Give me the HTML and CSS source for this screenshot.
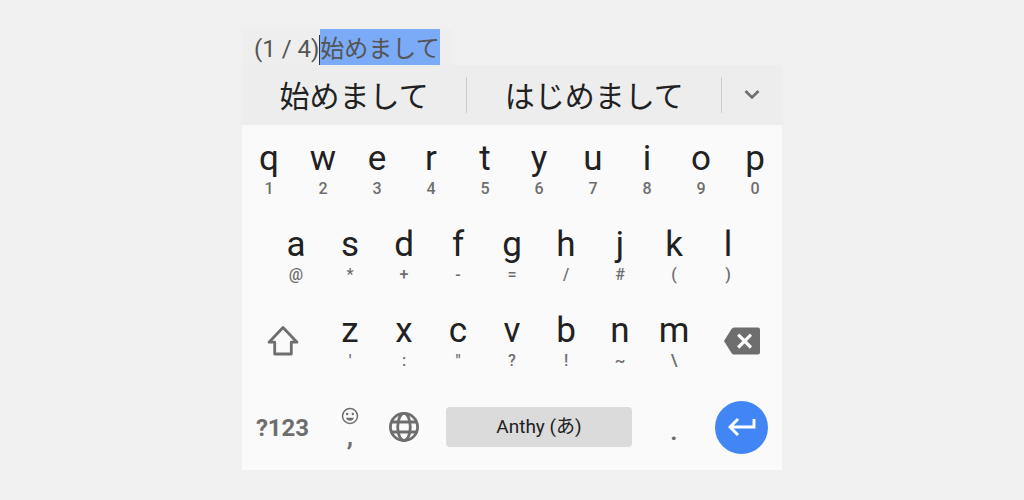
FILE: index.html
```html
<!DOCTYPE html>
<html lang="ja">
<head>
  <meta charset="UTF-8" />
  <meta name="viewport" content="width=device-width, initial-scale=1" />
  <title>Anthy Keyboard</title>
  <link rel="stylesheet" href="styles.css">
</head>
<body>
  <main class="keyboard">
    <div class="preedit"><span>(1 / 4)</span><span class="cursor"></span><mark>始めまして</mark></div>

    <div class="candidates">
      <button class="candidate">始めまして</button>
      <button class="candidate wide">はじめまして</button>
      <button class="expand" aria-label="More candidates">
        <svg width="24" height="24" viewBox="0 0 24 24"><path d="M5.5 8 12 14.500 18.500 8" fill="none" stroke="currentColor" stroke-width="2.600"/></svg>
      </button>
    </div>

    <div class="keys">
      <div class="row">
        <button class="key">q<small>1</small></button>
        <button class="key">w<small>2</small></button>
        <button class="key">e<small>3</small></button>
        <button class="key">r<small>4</small></button>
        <button class="key">t<small>5</small></button>
        <button class="key">y<small>6</small></button>
        <button class="key">u<small>7</small></button>
        <button class="key">i<small>8</small></button>
        <button class="key">o<small>9</small></button>
        <button class="key">p<small>0</small></button>
      </div>

      <div class="row">
        <button class="key first">a<small>@</small></button>
        <button class="key">s<small>*</small></button>
        <button class="key">d<small>+</small></button>
        <button class="key">f<small>-</small></button>
        <button class="key">g<small>=</small></button>
        <button class="key">h<small>/</small></button>
        <button class="key">j<small>#</small></button>
        <button class="key">k<small>(</small></button>
        <button class="key">l<small>)</small></button>
      </div>

      <div class="row">
        <button class="key side" aria-label="Shift">
          <svg width="32" height="32" viewBox="0 0 32 32"><path d="M16 2.500 30 17.200H24.300V29H7.700V17.200H2Z" fill="none" stroke="currentColor" stroke-width="2.800" stroke-linejoin="round"/></svg>
        </button>
        <button class="key">z<small>'</small></button>
        <button class="key">x<small>:</small></button>
        <button class="key">c<small>"</small></button>
        <button class="key">v<small>?</small></button>
        <button class="key">b<small>!</small></button>
        <button class="key">n<small>~</small></button>
        <button class="key">m<small>\</small></button>
        <button class="key side" aria-label="Backspace">
          <svg width="36" height="28" viewBox="0 0 36 28"><path d="M10 .5H34Q36 .5 36 2.500V25.500Q36 27.500 34 27.500H10Q8.500 27.500 7.500 26L0 14 7.500 2Q8.500 .5 10 .5Z" fill="currentColor"/><path d="M14.200 7.700 27 20.500M27 7.700 14.200 20.500" stroke="#fafafa" stroke-width="3.200"/></svg>
        </button>
      </div>

      <div class="row">
        <button class="key side symbols">?123</button>
        <button class="key comma" aria-label="Comma, emoji">
          <svg width="18" height="18" viewBox="0 0 18 18"><circle cx="9" cy="9" r="7.500" fill="none" stroke="currentColor" stroke-width="1.500"/><circle cx="6.200" cy="7" r="1.200" fill="currentColor"/><circle cx="11.800" cy="7" r="1.200" fill="currentColor"/><path d="M5 10.700H13Q12 13.700 9 13.700T5 10.700Z" fill="currentColor"/></svg>
          <span>,</span>
        </button>
        <button class="key icon" aria-label="Switch language">
          <svg width="32" height="32" viewBox="0 0 32 32" fill="none" stroke="currentColor" stroke-width="2.800"><circle cx="16" cy="16" r="13.600"/><ellipse cx="16" cy="16" rx="6.300" ry="13.600"/><path d="M3.500 11H28.500M3.500 21H28.500"/></svg>
        </button>
        <button class="key space"><span>Anthy (あ)</span></button>
        <button class="key period">.</button>
        <button class="key side" aria-label="Enter">
          <span class="enter"><svg width="30" height="22" viewBox="0 0 30 22"><path d="M27 3V11H3M11 3 3 11 11 19" fill="none" stroke="currentColor" stroke-width="2.900"/></svg></span>
        </button>
      </div>
    </div>
  </main>
</body>
</html>
```
FILE: styles.css
```css
* {
  box-sizing: border-box;
}

body {
  margin: 0;
  padding: 29px 16px;
  background: #f0f0f0;
  font-family: Roboto, "Noto Sans CJK JP", sans-serif;
  color: #212121;
}

button {
  padding: 0;
  border: none;
  background: none;
  color: inherit;
  font: inherit;
  cursor: pointer;
}

svg {
  display: block;
}

.keyboard {
  max-width: 540px;
  margin: 0 auto;
}

.preedit {
  display: flex;
  width: fit-content;
  padding: 0 12px;
  background: #eeeeee;
  color: #555;
  font-size: 24px;
  line-height: 32px;
}

.preedit span,
.preedit mark {
  padding-top: 4px;
}

.preedit mark {
  background: #7baaf7;
  color: inherit;
}

.preedit .cursor {
  width: 1px;
  margin-top: 6px;
  background: #333;
}

.candidates {
  display: flex;
  align-items: center;
  height: 60px;
  background: #ededed;
}

.candidate {
  flex: 225;
  height: 36px;
  padding-top: 2px;
  border-right: 1px solid #cccccc;
  font-size: 30px;
  line-height: 36px;
}

.candidate.wide {
  flex: 255;
}

.expand {
  display: flex;
  flex: 60;
  justify-content: center;
  color: #6e6e6e;
}

.keys {
  padding-top: 1px;
  background: #fafafa;
}

.row {
  display: grid;
  grid-template-columns: repeat(20, 1fr);
  height: 86px;
}

.key {
  display: flex;
  flex-direction: column;
  grid-column: span 2;
  align-items: center;
  padding-top: 13px;
  font-size: 35px;
  line-height: 40px;
}

.key.first {
  grid-column: 2 / span 2;
}

.key small {
  color: #6e6e6e;
  font-size: 16px;
  font-weight: 500;
  line-height: 20px;
}

.key.side,
.key.icon,
.key.space {
  justify-content: center;
  padding-top: 0;
  color: #6e6e6e;
}

.key.side {
  grid-column: span 3;
}

.key.symbols {
  padding-top: 2px;
  font-size: 24px;
  font-weight: 700;
}

.comma,
.period {
  color: #6e6e6e;
  font-size: 28px;
  font-weight: 500;
}

.key.comma {
  padding-top: 23px;
  line-height: 22px;
}

.key.period {
  padding-top: 27px;
}

.key.space {
  grid-column: span 8;
  align-items: stretch;
  padding: 0 15px;
}

.space span {
  border-radius: 4px;
  background: #dbdbdb;
  color: #212121;
  font-size: 19px;
}

.enter {
  display: flex;
  align-items: center;
  justify-content: center;
  width: 53px;
  height: 53px;
  border-radius: 50%;
  background: #4285f4;
  color: #fff;
}
```
